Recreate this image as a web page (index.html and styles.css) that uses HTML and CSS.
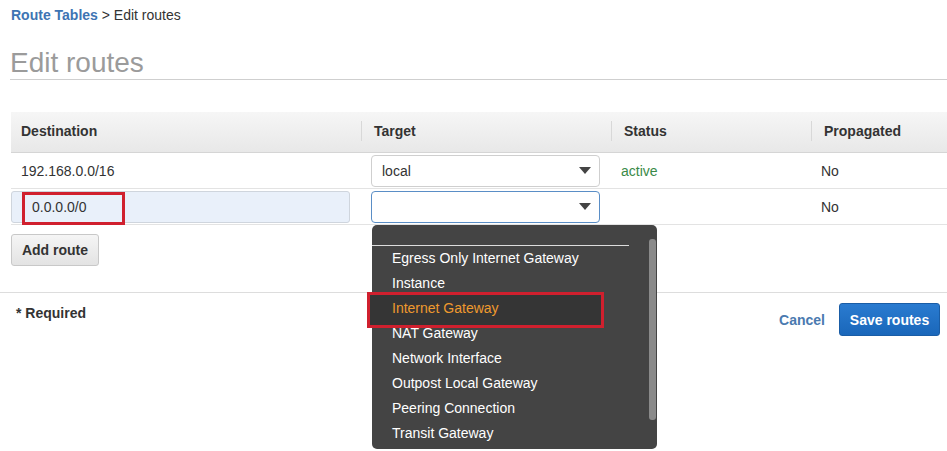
FILE: index.html
```html
<!DOCTYPE html>
<html>
<head>
<meta charset="utf-8">
<link rel="stylesheet" href="styles.css">
</head>
<body>
<div class="page">
  <div class="crumb"><a class="crumb-link">Route Tables</a> &gt; Edit routes</div>
  <h1 class="title">Edit routes</h1>

  <div class="table">
    <div class="thead">
      <div class="th first">Destination</div>
      <div class="th">Target</div>
      <div class="th">Status</div>
      <div class="th">Propagated</div>
    </div>
    <div class="row">
      <div class="td text">192.168.0.0/16</div>
      <div class="td sel-cell">
        <div class="select"><span>local</span><span class="caret"></span></div>
      </div>
      <div class="td text status">active</div>
      <div class="td text prop">No</div>
    </div>
    <div class="row">
      <div class="td input-cell">
        <div class="input"><span class="input-val">0.0.0.0/0</span><span class="mark"></span></div>
      </div>
      <div class="td sel-cell">
        <div class="select focus"><span></span><span class="caret"></span></div>
        <div class="dropdown">
          <div class="dd-rule"></div>
          <div class="opt">Egress Only Internet Gateway</div>
          <div class="opt">Instance</div>
          <div class="opt hl"><span>Internet Gateway</span></div>
          <div class="opt">NAT Gateway</div>
          <div class="opt">Network Interface</div>
          <div class="opt">Outpost Local Gateway</div>
          <div class="opt">Peering Connection</div>
          <div class="opt">Transit Gateway</div>
          <div class="scrollbar"></div>
        </div>
      </div>
      <div class="td text"></div>
      <div class="td text prop">No</div>
    </div>
  </div>

  <button class="btn add">Add route</button>
</div>

<div class="footer">
  <div class="required">* Required</div>
  <div class="actions">
    <a class="cancel">Cancel</a>
    <button class="btn primary">Save routes</button>
  </div>
</div>
</body>
</html>
```

FILE: styles.css
```css
* { box-sizing: border-box; }
html, body { margin: 0; padding: 0; }
body {
  font-family: "Liberation Sans", Arial, sans-serif;
  font-size: 14px;
  color: #333;
  background: #fff;
  min-height: 451px;
}
.page { padding: 7px 0 0 11px; }
.crumb { line-height: 16px; height: 16px; }
.crumb-link { color: #3d74b3; font-weight: bold; }
.title {
  margin: 24px 0 32px -1px;
  font-size: 28px;
  line-height: 32px;
  font-weight: normal;
  color: #9b9b9b;
  border-bottom: 1px solid #cfcfcf;
  height: 33px;
}
.table { width: 936px; }
.thead {
  display: grid;
  grid-template-columns: 350px 250px 200px 1fr;
  height: 41px;
  padding-bottom: 2px;
  background: linear-gradient(#f6f6f6, #e8e8e8);
  border-bottom: 1px solid #d5d5d5;
  align-items: center;
}
.th {
  font-weight: bold;
  padding-left: 12px;
  line-height: 20px;
  border-left: 1px solid #d8d8d8;
}
.th.first { border-left: none; padding-left: 10px; }
.row {
  display: grid;
  grid-template-columns: 350px 250px 200px 1fr;
  height: 36px;
  border-bottom: 1px solid #e3e3e3;
  align-items: center;
}
.td.text { padding-left: 10px; }
.td.prop { padding-left: 10px; }
.status { color: #3a8a48; }
.sel-cell { padding-left: 10px; position: relative; height: 100%; display: flex; align-items: center; }
.select {
  width: 229px;
  height: 32px;
  border: 1px solid #cfcfcf;
  border-radius: 4px;
  background: #fff;
  display: flex;
  align-items: center;
  justify-content: space-between;
  padding: 0 8px 0 10px;
}
.select.focus { border-color: #5a8ec6; }
.caret {
  width: 0; height: 0;
  border-left: 6px solid transparent;
  border-right: 6px solid transparent;
  border-top: 7px solid #444;
}
.input-cell { height: 100%; display: flex; align-items: center; }
.input {
  position: relative;
  width: 339px;
  height: 32px;
  background: #e9f0fa;
  border: 1px solid #cfd5dd;
  border-radius: 3px;
  display: flex;
  align-items: center;
  padding-left: 20px;
}
.mark {
  position: absolute;
  left: 10px;
  top: 0px;
  width: 103px;
  height: 33px;
  border: 3px solid #d0202e;
}
.dropdown {
  position: absolute;
  left: 11px;
  top: 36px;
  width: 285px;
  height: 224px;
  background: #444;
  border-radius: 5px;
  padding-top: 20px;
  z-index: 5;
}
.dd-rule { width: 257px; height: 1px; background: #ddd; }
.opt {
  position: relative;
  height: 25px;
  line-height: 25px;
  padding-left: 20px;
  color: #fff;
  white-space: nowrap;
}
.opt.hl { color: #ef9a2e; }
.opt.hl::before {
  content: "";
  position: absolute;
  left: -5px;
  top: -4px;
  width: 231px;
  height: 30px;
  border: 3px solid #d0202e;
  background: #353535;
}
.opt.hl span { position: relative; }
.scrollbar {
  position: absolute;
  right: 1px;
  top: 14px;
  width: 7px;
  height: 181px;
  background: #8a8a8a;
  border-radius: 3px;
}
.btn {
  font-family: "Liberation Sans", Arial, sans-serif;
  font-size: 14px;
  font-weight: bold;
  border-radius: 3px;
  cursor: pointer;
}
.add {
  margin-top: 9px;
  width: 88px;
  height: 32px;
  color: #333;
  background: linear-gradient(#f5f5f5, #e3e3e3);
  border: 1px solid #c8c8c8;
  padding: 0;
}
.footer {
  margin-top: 26px;
  border-top: 1px solid #ddd;
  display: flex;
  justify-content: space-between;
  padding: 10px 7px 0 16px;
}
.required { font-weight: bold; line-height: 20px; }
.actions { display: flex; align-items: center; gap: 14px; }
.cancel { color: #4a7ab0; font-weight: bold; }
.primary {
  width: 101px;
  height: 33px;
  color: #fff;
  background: linear-gradient(#2a7bd0, #1a67ba);
  border: 1px solid #1a5da6;
  padding: 0;
}
```
